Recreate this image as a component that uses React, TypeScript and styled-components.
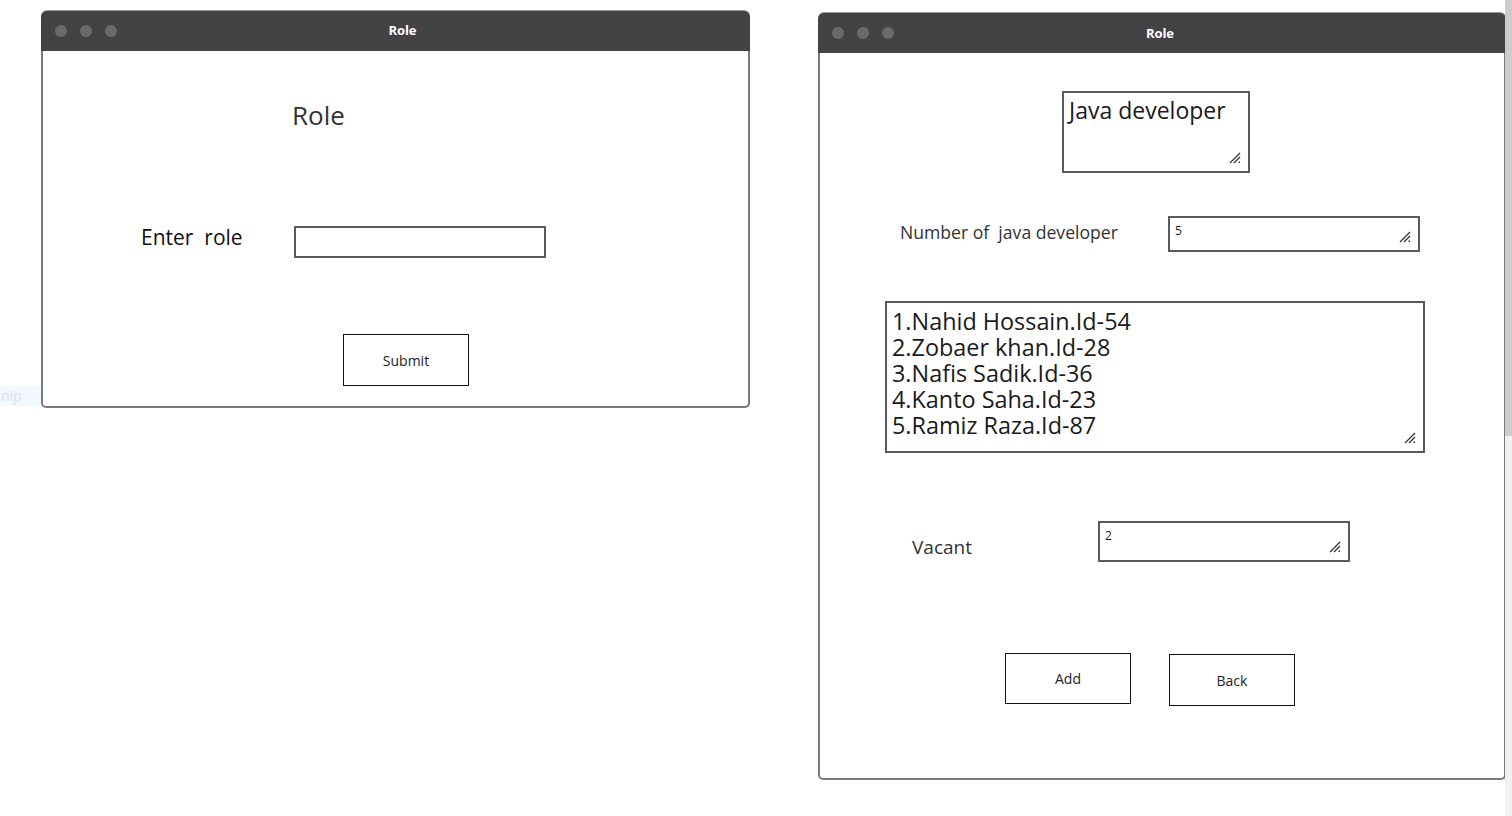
import React from "react";
import styled, { createGlobalStyle } from "styled-components";

const Global = createGlobalStyle`
  html, body { margin: 0; padding: 0; background: #fff; }
  body { font-family: "Open Sans", "Noto Sans", sans-serif; overflow: hidden; }
`;

const Desktop = styled.div`
  position: relative;
  width: 1512px;
  height: 816px;
  background: #fff;
`;

const Window = styled.div<{ $x: number; $y: number; $w: number; $h: number }>`
  position: absolute;
  left: ${(p) => p.$x}px;
  top: ${(p) => p.$y}px;
  width: ${(p) => p.$w}px;
  height: ${(p) => p.$h}px;
  display: flex;
  flex-direction: column;
  box-sizing: border-box;
`;

const TitleBar = styled.div`
  position: relative;
  height: 40px;
  flex: none;
  background: #434343;
  border-radius: 6px 6px 0 0;
  display: flex;
  align-items: center;
  justify-content: center;
  box-shadow: 0 -1px 0 #9a9a9a;
`;

const Dots = styled.div`
  position: absolute;
  left: 14px;
  top: 0;
  bottom: 0;
  display: flex;
  align-items: center;
  gap: 13px;
`;

const Dot = styled.span`
  width: 12px;
  height: 12px;
  border-radius: 50%;
  background: #6a6a6a;
`;

const Title = styled.span<{ $dx: number; $dy: number }>`
  position: relative;
  left: ${(p) => p.$dx}px;
  top: ${(p) => p.$dy}px;
  color: #fff;
  font-size: 13px;
  font-weight: 700;
  font-family: "Open Sans", sans-serif;
  letter-spacing: -0.1px;
`;

const Body = styled.div`
  flex: 1;
  border: 2px solid #7a7a7a;
  border-top: none;
  border-radius: 0 0 5px 5px;
  background: #fff;
  display: flex;
  flex-direction: column;
  box-sizing: border-box;
`;

const Heading = styled.div<{ $ml: number; $mt: number }>`
  margin: ${(p) => p.$mt}px 0 0 ${(p) => p.$ml}px;
  font-size: 26px;
  line-height: 32px;
  color: #333;
`;

const Row = styled.div<{ $mt: number; $ml: number }>`
  display: flex;
  align-items: center;
  margin: ${(p) => p.$mt}px 0 0 ${(p) => p.$ml}px;
`;

const Label = styled.div<{ $size: number; $w: number; $color?: string; $dy?: number }>`
  width: ${(p) => p.$w}px;
  flex: none;
  font-size: ${(p) => p.$size}px;
  color: ${(p) => p.$color || "#222"};
  white-space: pre;
  position: relative;
  top: ${(p) => p.$dy || 0}px;
`;

const Field = styled.div<{ $w: number; $h: number; $ml?: number; $mt?: number }>`
  position: relative;
  width: ${(p) => p.$w}px;
  height: ${(p) => p.$h}px;
  margin: ${(p) => p.$mt || 0}px 0 0 ${(p) => p.$ml || 0}px;
  box-sizing: border-box;
  border: 2px solid #5a5a5a;
  background: #fff;
  flex: none;
`;

const FieldText = styled.div<{ $size: number; $lh: number; $pl: number; $pt: number }>`
  padding: ${(p) => p.$pt}px 0 0 ${(p) => p.$pl}px;
  font-size: ${(p) => p.$size}px;
  line-height: ${(p) => p.$lh}px;
  color: #1a1a1a;
  white-space: pre;
`;

const GripBox = styled.svg`
  position: absolute;
  right: 7px;
  bottom: 7px;
`;

const Grip = () => (
  <GripBox width="12" height="12" viewBox="0 0 12 12">
    <line x1="1" y1="11" x2="11" y2="1" stroke="#333" strokeWidth="1.2" />
    <line x1="5" y1="11" x2="11" y2="5" stroke="#333" strokeWidth="1.2" />
    <rect x="9.5" y="9.5" width="1.5" height="1.5" fill="#333" />
  </GripBox>
);

const Buttons = styled.div<{ $mt: number; $ml: number }>`
  display: flex;
  align-items: flex-start;
  gap: 38px;
  margin: ${(p) => p.$mt}px 0 0 ${(p) => p.$ml}px;
`;

const Button = styled.div<{ $dy?: number; $h?: number }>`
  width: 126px;
  height: ${(p) => p.$h || 51}px;
  margin-top: ${(p) => p.$dy || 0}px;
  box-sizing: border-box;
  border: 1.5px solid #111;
  display: flex;
  align-items: center;
  justify-content: center;
  font-size: 14px;
  color: #222;
  background: #fff;
`;

const Ghost = styled.div`
  position: absolute;
  left: 0;
  top: 386px;
  width: 76px;
  height: 20px;
  background: #f2f8fd;
  color: #d5e2ec;
  font-size: 14px;
  line-height: 20px;
  padding-left: 1px;
  box-sizing: border-box;
`;

const Scrollbar = styled.div`
  position: absolute;
  right: 0;
  top: 0;
  width: 7px;
  height: 816px;
  background: #f1f1f1;
`;

const Thumb = styled.div`
  width: 100%;
  height: 436px;
  background: #cdcdcd;
`;

const members = [
  "1.Nahid Hossain.Id-54",
  "2.Zobaer khan.Id-28",
  "3.Nafis Sadik.Id-36",
  "4.Kanto Saha.Id-23",
  "5.Ramiz Raza.Id-87",
];

export default function App() {
  return (
    <Desktop>
      <Global />
      <Ghost>nip</Ghost>
      <Window $x={41} $y={11} $w={709} $h={397}>
        <TitleBar>
          <Dots>
            <Dot />
            <Dot />
            <Dot />
          </Dots>
          <Title $dx={7} $dy={-1}>Role</Title>
        </TitleBar>
        <Body>
          <Heading $ml={249} $mt={48}>Role</Heading>
          <Row $mt={95} $ml={98}>
            <Label $size={21} $w={153} $color="#111" $dy={-5}>Enter  role</Label>
            <Field $w={252} $h={32} />
          </Row>
          <Buttons $mt={76} $ml={300}>
            <Button $h={52}>Submit</Button>
          </Buttons>
        </Body>
      </Window>

      <Window $x={818} $y={13} $w={688} $h={767}>
        <TitleBar>
          <Dots>
            <Dot />
            <Dot />
            <Dot />
          </Dots>
          <Title $dx={-2} $dy={0}>Role</Title>
        </TitleBar>
        <Body>
          <Field $w={188} $h={82} $ml={242} $mt={38}>
            <FieldText $size={23} $lh={28} $pl={5} $pt={3}>Java developer</FieldText>
            <Grip />
          </Field>
          <Row $mt={43} $ml={80}>
            <Label $size={17.6} $w={268} $color="#333" $dy={-2}>Number of  java developer</Label>
            <Field $w={252} $h={36}>
              <FieldText $size={12} $lh={16} $pl={5} $pt={5}>5</FieldText>
              <Grip />
            </Field>
          </Row>
          <Field $w={540} $h={152} $ml={65} $mt={49}>
            <FieldText $size={23.4} $lh={26} $pl={5} $pt={5}>{members.join("\n")}</FieldText>
            <Grip />
          </Field>
          <Row $mt={68} $ml={92}>
            <Label $size={19} $w={186} $color="#333" $dy={5}>Vacant</Label>
            <Field $w={252} $h={41}>
              <FieldText $size={12} $lh={16} $pl={5} $pt={5}>2</FieldText>
              <Grip />
            </Field>
          </Row>
          <Buttons $mt={91} $ml={185}>
            <Button>Add</Button>
            <Button $dy={1} $h={52}>Back</Button>
          </Buttons>
        </Body>
      </Window>
      <Scrollbar>
        <Thumb />
      </Scrollbar>
    </Desktop>
  );
}
